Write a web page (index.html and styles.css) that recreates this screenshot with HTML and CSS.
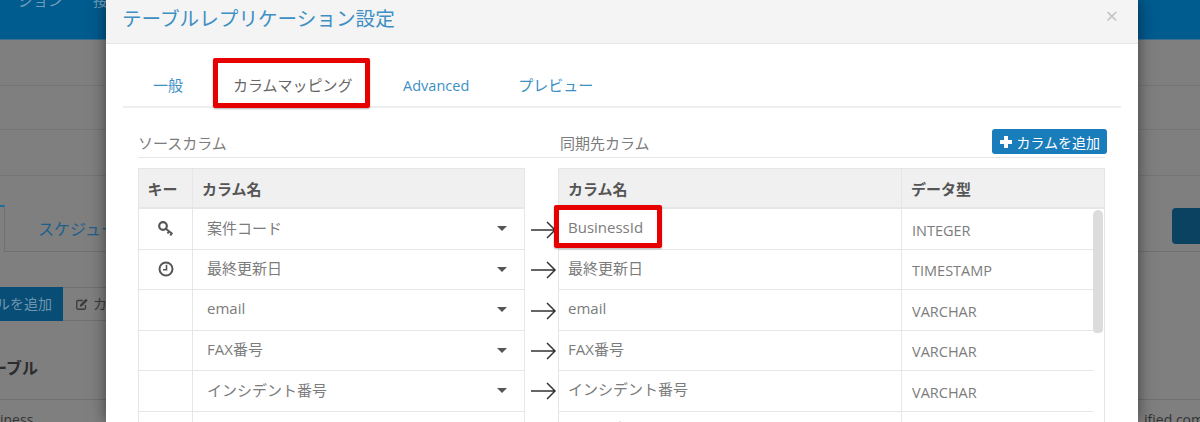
FILE: index.html
```html
<!DOCTYPE html>
<html lang="ja">
<head>
<meta charset="utf-8">
<title>テーブルレプリケーション設定</title>
<link rel="stylesheet" href="styles.css">
</head>
<body>
<div class="page">
  <div class="topbar"><span class="nav-a">ジョン</span><span class="nav-b">接</span></div>
  <div class="band band-a"></div>
  <div class="band band-b"></div>
  <div class="band band-c"></div>
  <div class="bg-tabs">
    <div class="bg-tab-active"></div>
    <div class="bg-tab">スケジュール</div>
  </div>
  <div class="bg-toolbar">
    <div class="bg-btn-blue">ルを追加</div>
    <div class="bg-btn-plain">
      <svg class="bg-edit" viewBox="0 0 16 16" aria-hidden="true"><path d="M12 9v3.500a1.500 1.500 0 0 1-1.500 1.500h-7A1.500 1.500 0 0 1 2 12.500v-7A1.500 1.500 0 0 1 3.500 4H9" fill="none" stroke="currentColor" stroke-width="1.500"/><path d="M6 8.500 12.500 2l2 2L8 10.500l-2.500.5z" fill="currentColor"/></svg>
      <span>カラム</span>
    </div>
  </div>
  <div class="bg-heading">ーブル</div>
  <div class="bg-row"><span>iness</span><span>ified com</span></div>
</div>

<div class="modal">
  <header class="modal-head">
    <h1 class="modal-title">テーブルレプリケーション設定</h1>
    <span class="modal-close">×</span>
  </header>
  <nav class="tabs">
    <a class="tab tab-general">一般</a>
    <a class="tab tab-active">カラムマッピング<span class="mark mark-tab"></span></a>
    <a class="tab tab-advanced">Advanced</a>
    <a class="tab tab-preview">プレビュー</a>
  </nav>
  <div class="section-head">
    <div class="section-source">ソースカラム</div>
    <div class="section-target">同期先カラム</div>
    <button class="add-btn"><svg class="plus" viewBox="0 0 14 14" aria-hidden="true"><path d="M5 1h4v4h4v4H9v4H5V9H1V5h4z" fill="currentColor"/></svg>カラムを追加</button>
  </div>

  <div class="mapping">
    <div class="grid grid-source">
      <div class="cell head key head-key">キー</div><div class="cell head name">カラム名</div>

      <div class="cell key">
        <svg class="icon" viewBox="0 0 18 18" aria-hidden="true"><circle cx="6" cy="6" r="3.800" fill="none" stroke="currentColor" stroke-width="2.200"/><path d="M8.800 8.800 15.500 14M12 11.500l-1.500 2M14.500 13.500l-1.200 2" fill="none" stroke="currentColor" stroke-width="2"/></svg>
      </div>
      <div class="cell select"><span>案件コード</span><i class="caret"></i></div>

      <div class="cell key">
        <svg class="icon" viewBox="0 0 18 18" aria-hidden="true"><circle cx="9" cy="9" r="6.500" fill="none" stroke="currentColor" stroke-width="2"/><path d="M9.500 4.800V9.800H6" fill="none" stroke="currentColor" stroke-width="1.600"/></svg>
      </div>
      <div class="cell select"><span>最終更新日</span><i class="caret"></i></div>

      <div class="cell key"></div>
      <div class="cell select"><span>email</span><i class="caret"></i></div>

      <div class="cell key"></div>
      <div class="cell select"><span>FAX番号</span><i class="caret"></i></div>

      <div class="cell key"></div>
      <div class="cell select"><span>インシデント番号</span><i class="caret"></i></div>

      <div class="cell key"></div>
      <div class="cell select"></div>
    </div>

    <div class="arrows">
      <svg class="arrow" viewBox="0 0 26 20" aria-hidden="true"><path d="M0 10H24M16 2l8 8-8 8" fill="none" stroke="currentColor" stroke-width="1.500"/></svg>
      <svg class="arrow" viewBox="0 0 26 20" aria-hidden="true"><path d="M0 10H24M16 2l8 8-8 8" fill="none" stroke="currentColor" stroke-width="1.500"/></svg>
      <svg class="arrow" viewBox="0 0 26 20" aria-hidden="true"><path d="M0 10H24M16 2l8 8-8 8" fill="none" stroke="currentColor" stroke-width="1.500"/></svg>
      <svg class="arrow" viewBox="0 0 26 20" aria-hidden="true"><path d="M0 10H24M16 2l8 8-8 8" fill="none" stroke="currentColor" stroke-width="1.500"/></svg>
      <svg class="arrow" viewBox="0 0 26 20" aria-hidden="true"><path d="M0 10H24M16 2l8 8-8 8" fill="none" stroke="currentColor" stroke-width="1.500"/></svg>
    </div>

    <div class="target-wrap">
      <div class="grid grid-target">
        <div class="cell head">カラム名</div><div class="cell head head-last">データ型</div>

        <div class="cell tname">BusinessId<span class="mark mark-cell"></span></div><div class="cell ttype">INTEGER</div>
        <div class="cell tname">最終更新日</div><div class="cell ttype">TIMESTAMP</div>
        <div class="cell tname">email</div><div class="cell ttype">VARCHAR</div>
        <div class="cell tname">FAX番号</div><div class="cell ttype">VARCHAR</div>
        <div class="cell tname">インシデント番号</div><div class="cell ttype">VARCHAR</div>
        <div class="cell tname tlast">ステータス</div><div class="cell ttype"></div>
      </div>
      <div class="scroll-track"><div class="scroll-thumb"></div></div>
    </div>
  </div>
</div>
</body>
</html>
```
FILE: styles.css
```css
* { box-sizing: border-box; }
html, body { margin: 0; height: 422px; overflow: hidden; }
body {
  position: relative;
  font-family: "Open Sans", "Noto Sans CJK JP", sans-serif;
  font-size: 15px;
  color: #7c7c7c;
  background: #7f7f7f;
}

/* dimmed page behind the dialog */
.page { height: 422px; overflow: hidden; background: #7f7f7f; color: #333; }
.topbar {
  height: 40px;
  background: #005b8e;
  border-bottom: 1px solid #3f6f8d;
  color: #6f9cba;
  font-size: 15px;
  line-height: 1;
  display: flex;
  gap: 30px;
  padding-left: 18px;
}
.nav-a, .nav-b { margin-top: -7px; }
.band { border-bottom: 1px solid #757575; }
.band-a { height: 46px; }
.band-b { height: 44px; }
.band-c { height: 46px; }
.bg-tabs { position: relative; display: flex; height: 76px; padding-top: 29px; }
.bg-tab-active { width: 5px; height: 47px; border-top: 2px solid #1e6f9f; border-right: 1px solid #707070; }
.bg-tab {
  flex: 1;
  height: 47px;
  padding-left: 33px;
  line-height: 48px;
  border-bottom: 1px solid #707070;
  color: #1d5f8b;
  font-size: 16px;
  white-space: nowrap;
}
.bg-tabs::after {
  content: "";
  position: absolute;
  right: -8px;
  top: 32px;
  width: 36px;
  height: 36px;
  border-radius: 4px;
  background: #0b4261;
}
.bg-toolbar { display: flex; height: 34px; margin-top: 35px; font-size: 14px; line-height: 34px; }
.bg-btn-blue { width: 63px; background: #074d76; color: #6f95ad; text-align: right; padding-right: 11px; white-space: nowrap; direction: rtl; overflow: hidden; }
.bg-btn-plain { display: flex; align-items: center; gap: 4px; padding-left: 12px; width: 60px; border: 1px solid #707070; border-left: 0; color: #3b3b3b; white-space: nowrap; }
.bg-edit { width: 14px; height: 14px; flex: none; }
.bg-heading { margin-top: 36px; height: 42px; font-size: 16px; font-weight: 700; color: #2c2c2c; line-height: 22px; direction: rtl; text-align: left; width: 38px; white-space: nowrap; overflow: hidden; }
.bg-row { display: flex; justify-content: space-between; border-top: 1px solid #707070; font-size: 14px; padding-top: 10px; color: #333; margin-right: -4px; }

/* dialog */
.modal {
  position: absolute;
  left: 106px;
  top: 0;
  width: 1032px;
  height: 422px;
  background: #fff;
  box-shadow: 0 0 15px rgba(0, 0, 0, .5);
  overflow: hidden;
}
.modal-head {
  display: flex;
  justify-content: space-between;
  height: 44px;
  padding: 0 20px 0 16px;
  background: #f4f4f4;
  border-bottom: 1px solid #e5e5e5;
}
.modal-title {
  margin: 0;
  font-size: 19.600px;
  font-weight: 400;
  line-height: 37px;
  color: #3d8fc4;
  white-space: nowrap;
}
.modal-close { font-size: 22px; line-height: 30px; color: #c4c4c4; }

.tabs {
  position: relative;
  display: flex;
  height: 64px;
  margin: 0 17px;
  border-bottom: 2px solid #eee;
  line-height: 83px;
  color: #3d8fc4;
  white-space: nowrap;
}
.tab { position: relative; display: block; height: 62px; }
.tab-general { margin-left: 30px; }
.tab-active { margin-left: 50px; color: #666; }
.tab-advanced { margin-left: 50.500px; font-size: 14.500px; }
.tab-preview { margin-left: 49px; }

.mark {
  position: absolute;
  border: 5px solid #e60000;
  border-radius: 2px;
  box-shadow: 0 1px 2px rgba(0, 0, 0, .3);
  pointer-events: none;
}
.mark-tab { left: -20px; right: -17px; top: 14px; height: 50px; }
.mark-cell { left: -5px; top: -4px; width: 108px; height: 43px; }

.section-head {
  display: flex;
  align-items: flex-end;
  height: 50px;
  margin: 0 33px 0 32px;
  padding-bottom: 3px;
  border-bottom: 1px solid #e6e6e6;
  color: #7c7c7c;
}
.section-source { width: 422px; line-height: 22px; }
.section-target { flex: 1; line-height: 22px; }
.add-btn {
  display: flex;
  align-items: center;
  gap: 3px;
  align-self: flex-start;
  margin: 21px -2px 0 0;
  padding: 0 7px;
  height: 25px;
  background: #1a7dbb;
  border: 0;
  border-radius: 3px;
  color: #fff;
  font: 14px "Open Sans", "Noto Sans CJK JP", sans-serif;
  white-space: nowrap;
}
.plus { width: 14px; height: 14px; }

.mapping { display: flex; margin: 10px 0 0 32px; }
.grid { display: grid; grid-template-rows: 40px repeat(6, 40.500px); }
.grid-source { width: 387px; grid-template-columns: 54px 332px; border-left: 1px solid #e5e5e5; border-top: 1px solid #e5e5e5; }
.cell {
  display: flex;
  align-items: center;
  border-bottom: 1px solid #e6e6e6;
  border-right: 1px solid #e6e6e6;
  white-space: nowrap;
}
.head { background: #f0f0f0; font-weight: 700; color: #555; border-bottom-width: 2px; padding-left: 9px; }
.key { justify-content: center; padding: 0; color: #555; }
.head-key { padding-right: 6px; }
.name { padding-left: 9px; }
.select { justify-content: space-between; padding: 0 17px 3px 14px; }
.caret { width: 0; height: 0; margin-top: 3px; border: 5px solid transparent; border-top: 5px solid #555; border-bottom: 0; }
.icon { width: 18px; height: 18px; }

.arrows { display: flex; flex-direction: column; width: 33px; padding: 52px 0 0 6px; gap: 20.300px; color: #333; }
.arrow { width: 26px; height: 20px; flex: none; }

.target-wrap { position: relative; width: 547px; border-right: 1px solid #e5e5e5; border-left: 1px solid #e5e5e5; border-top: 1px solid #e5e5e5; }
.grid-target { grid-template-columns: 343px 202px; }
.head-last { border-right: 0; }
.tname { position: relative; padding: 0 9px 4px; }
.tlast { padding-bottom: 7px; }
.ttype { padding: 3px 10px 0; font-size: 14.500px; border-right: 0; }
.scroll-track {
  position: absolute;
  right: 0;
  top: 40px;
  bottom: 0;
  width: 11px;
  padding-top: 1px;
  background: #fff;
}
.scroll-thumb {
  width: 10px;
  height: 123px;
  border-radius: 5px 5px 4px 4px;
  background: #dcdcdc;
}
```
